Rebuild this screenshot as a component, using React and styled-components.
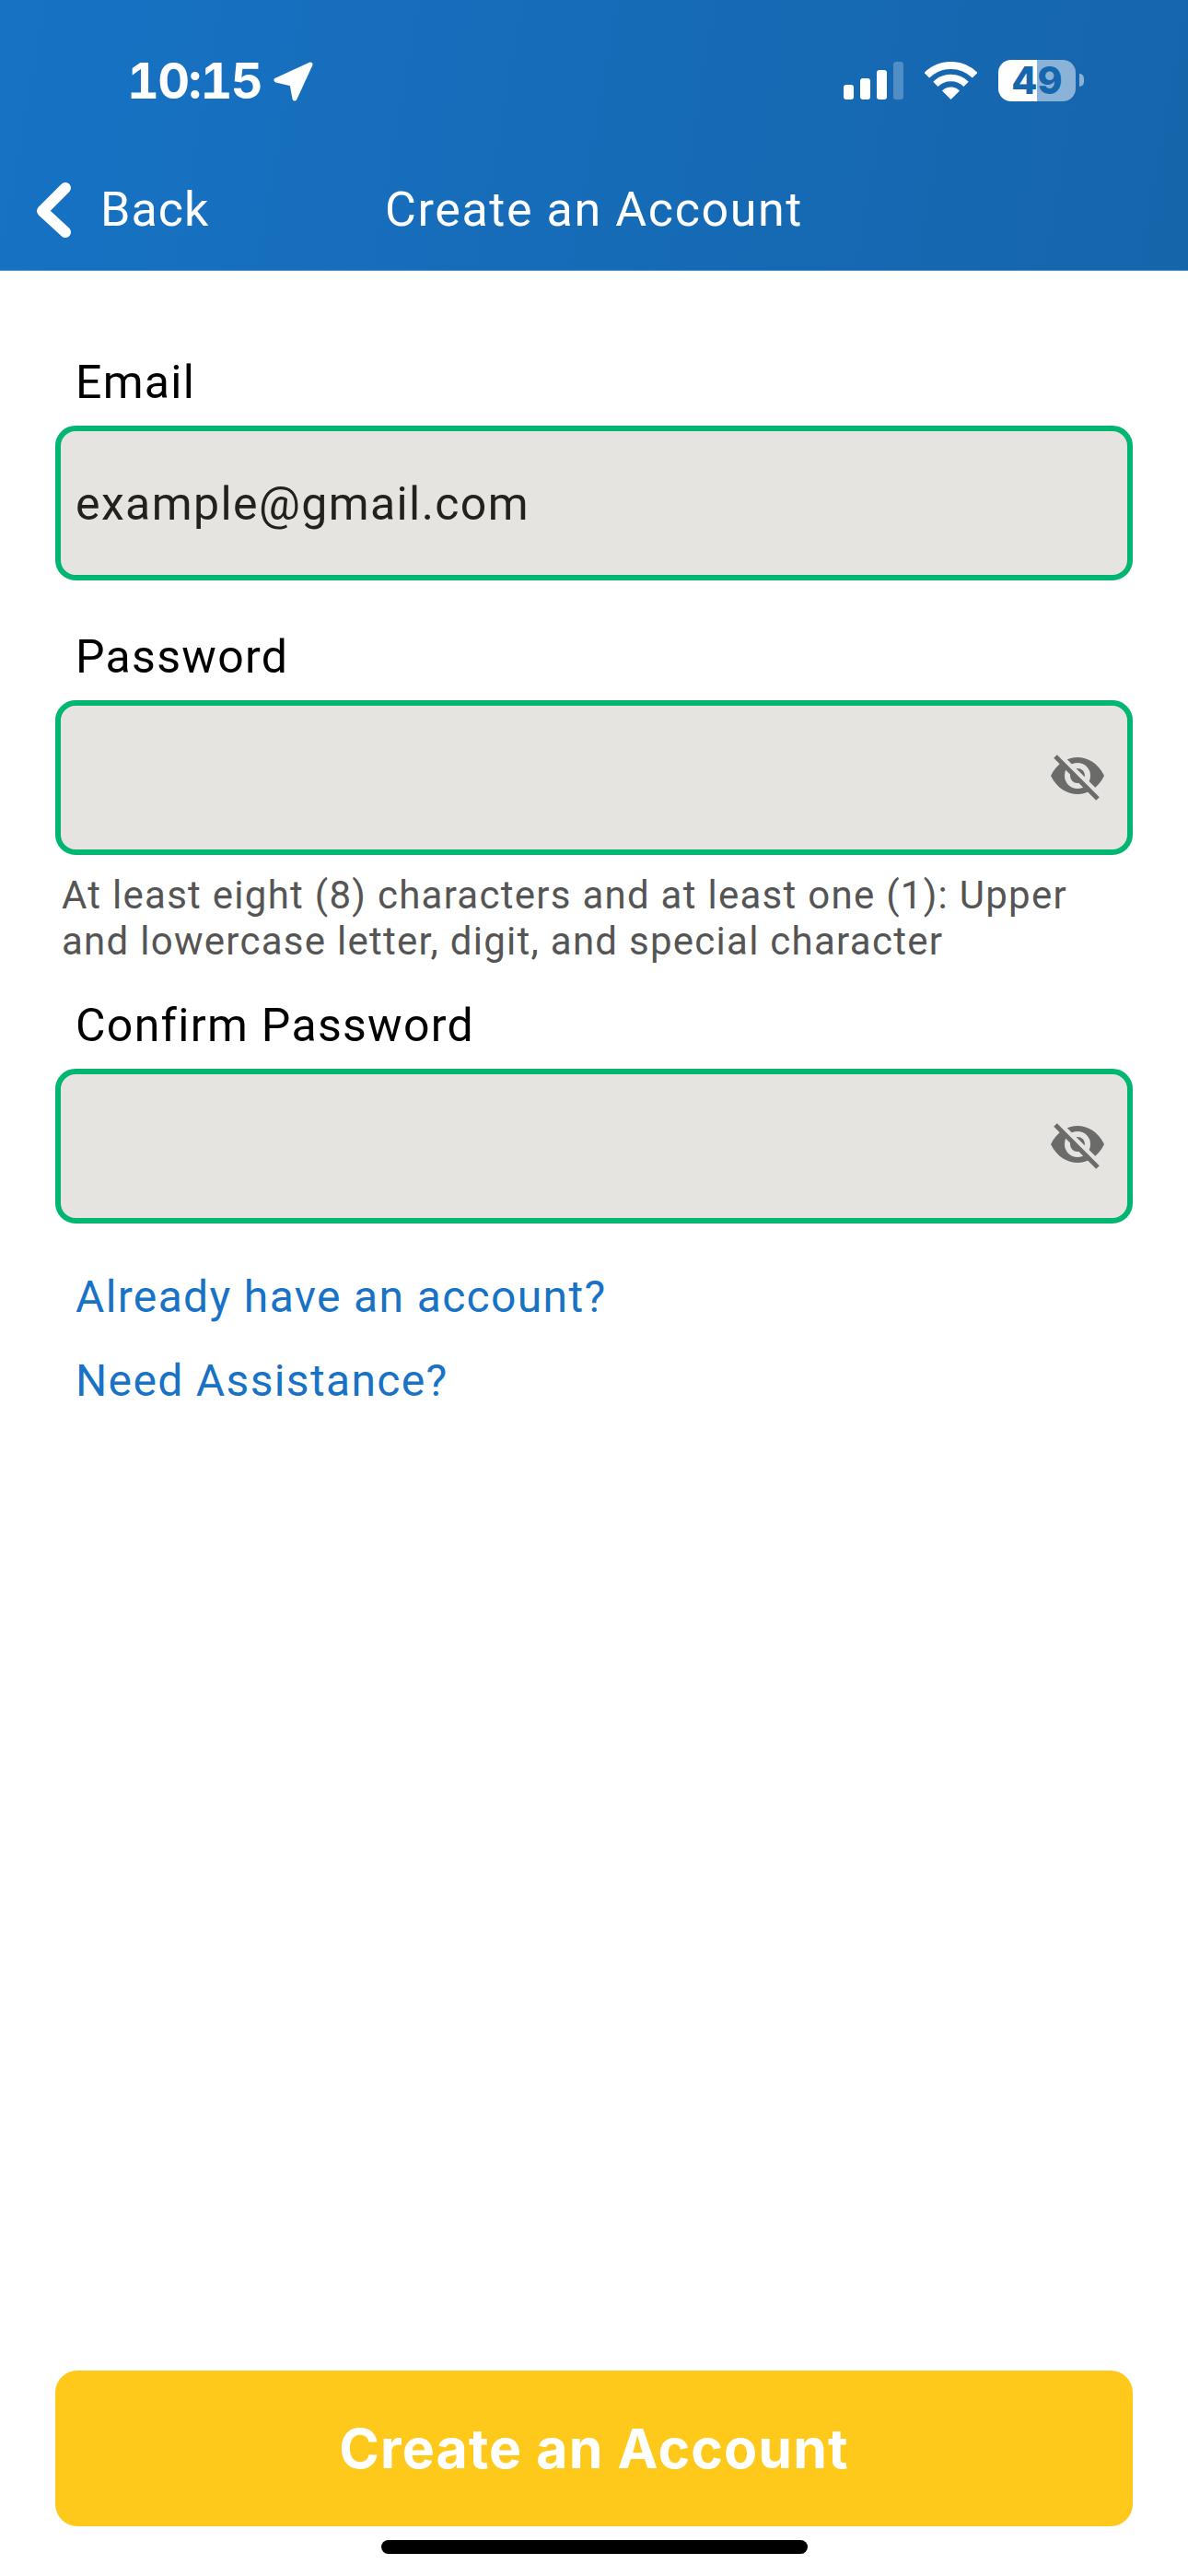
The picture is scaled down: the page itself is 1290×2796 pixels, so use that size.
import React from "react";
import styled, { createGlobalStyle } from "styled-components";

const Global = createGlobalStyle`
  html, body { margin: 0; padding: 0; background: #fff; }
  * { box-sizing: border-box; }
  body { font-family: "Roboto", "Inter", sans-serif; }
`;

const Page = styled.div`
  width: 1290px;
  height: 2796px;
  display: flex;
  flex-direction: column;
  background: #fff;
`;

const Header = styled.header`
  height: 294px;
  background: linear-gradient(100deg, #1772c4 0%, #1565ab 100%);
  border-bottom: 1px solid #4a8fcf;
  color: #fff;
`;

const StatusBar = styled.div`
  height: 175px;
  display: flex;
  align-items: center;
  justify-content: space-between;
  padding: 0 122px 0 138px;
`;

const TimeGroup = styled.div`
  display: flex;
  align-items: center;
  gap: 13px;
`;

const Time = styled.span`
  font-family: "Inter", sans-serif;
  font-size: 54px;
  font-weight: 700;
  line-height: 1;
  letter-spacing: -1.6px;
  font-variant-numeric: tabular-nums;
`;

const StatusIcons = styled.div`
  display: flex;
  align-items: center;
  gap: 23px;
`;

const Battery = styled.div`
  position: relative;
  width: 84px;
  height: 45px;
  border-radius: 14px;
  background: linear-gradient(90deg, #fff 50%, rgba(255, 255, 255, 0.5) 50%);
  color: #1666ad;
  font-family: "Inter", sans-serif;
  font-size: 41px;
  font-weight: 800;
  line-height: 45px;
  text-align: center;
  &::after {
    content: "";
    position: absolute;
    left: 88px;
    top: 15px;
    width: 5px;
    height: 14px;
    border-radius: 0 7px 7px 0;
    background: rgba(255, 255, 255, 0.5);
  }
`;

const Nav = styled.nav`
  height: 105px;
  display: grid;
  grid-template-columns: 1fr auto 1fr;
  align-items: center;
  padding: 0 40px;
`;

const BackLink = styled.div`
  display: flex;
  align-items: center;
  gap: 32px;
  font-size: 52px;
  line-height: 1;
  letter-spacing: 1px;
`;

const Title = styled.h1`
  margin: 0;
  font-size: 52px;
  font-weight: 400;
  line-height: 1;
  letter-spacing: 1.6px;
`;

const Form = styled.main`
  flex: 1;
  display: flex;
  flex-direction: column;
  padding: 0 60px;
`;

const Label = styled.div`
  margin-top: ${(p) => p.$top}px;
  padding-left: 22px;
  height: 60px;
  font-size: 50px;
  line-height: 62px;
  letter-spacing: 1.3px;
  color: #000;
`;

const Field = styled.div`
  margin-top: 18px;
  height: 168px;
  display: flex;
  align-items: center;
  justify-content: space-between;
  padding: 0 25px 0 16px;
  background: #e6e4e1;
  border: 6px solid #00b670;
  border-radius: 22px;
`;

const FieldValue = styled.span`
  padding-top: 2px;
  font-size: 50px;
  letter-spacing: 1.4px;
  color: #23211e;
`;

const Hint = styled.p`
  margin: 19px 0 0;
  padding-left: 7px;
  font-size: 42px;
  line-height: 50px;
  letter-spacing: 1.27px;
  color: #555;
`;

const Links = styled.div`
  margin-top: 50px;
  padding-left: 22px;
  display: flex;
  flex-direction: column;
  gap: 31px;
`;

const TextLink = styled.a`
  font-size: 48px;
  line-height: 60px;
  letter-spacing: 1.35px;
  color: #1872c6;
`;

const Footer = styled.footer`
  padding: 0 60px 24px;
  display: flex;
  flex-direction: column;
  align-items: center;
`;

const Submit = styled.button`
  width: 100%;
  height: 169px;
  border: 0;
  border-radius: 24px;
  background: #ffc91c;
  color: #fff;
  font-family: "Inter", sans-serif;
  font-size: 59px;
  font-weight: 700;
  letter-spacing: 1.1px;
`;

const HomeBar = styled.div`
  margin-top: 15px;
  width: 463px;
  height: 15px;
  border-radius: 8px;
  background: #000;
`;

const Eye = () => (
  <svg width="58" height="50" viewBox="0 0 58 50" aria-hidden="true">
    <path d="M0 23 C7 9 18 3 29 3 C40 3 51 9 58 23 C51 37 40 43 29 43 C18 43 7 37 0 23 Z" fill="#6b6b69" />
    <circle cx="29" cy="23" r="14" fill="#e6e4e1" />
    <circle cx="29" cy="23" r="8" fill="#6b6b69" />
    <path d="M5 2 L51 48" stroke="#e6e4e1" strokeWidth="5" transform="translate(3 -3)" />
    <path d="M5 2 L51 48" stroke="#6b6b69" strokeWidth="5" />
  </svg>
);

const Arrow = () => (
  <svg width="44" height="44" viewBox="0 0 44 44" aria-hidden="true">
    <path d="M40 4 L3 21 L20 25 L23 41 Z" fill="#fff" stroke="#fff" strokeWidth="5" strokeLinejoin="round" />
  </svg>
);

const Signal = () => (
  <svg width="65" height="41" viewBox="0 0 65 41" aria-hidden="true">
    <rect x="0" y="25" width="11" height="16" rx="3" fill="#fff" />
    <rect x="18" y="18" width="11" height="23" rx="3" fill="#fff" />
    <rect x="36" y="9" width="11" height="32" rx="3" fill="#fff" />
    <rect x="54" y="0" width="11" height="41" rx="3" fill="#fff" opacity="0.25" />
  </svg>
);

const Wifi = () => (
  <svg width="57" height="41" viewBox="0 0 57 41" fill="none" aria-hidden="true">
    <path d="M2.3 14.8 A37 37 0 0 1 54.7 14.8" stroke="#fff" strokeWidth="8" />
    <path d="M11.9 24.4 A23.5 23.5 0 0 1 45.1 24.4" stroke="#fff" strokeWidth="7.5" />
    <path d="M28.5 41 L19 31.5 A13.4 13.4 0 0 1 38 31.5 Z" fill="#fff" />
  </svg>
);

const Chevron = () => (
  <svg width="37" height="60" viewBox="0 0 37 60" fill="none" aria-hidden="true">
    <path d="M31 6 L6 31 L31 54" stroke="#fff" strokeWidth="12" strokeLinecap="round" strokeLinejoin="round" />
  </svg>
);

export default function App() {
  return (
    <Page>
      <Global />
      <Header>
        <StatusBar>
          <TimeGroup>
            <Time>10:15</Time>
            <Arrow />
          </TimeGroup>
          <StatusIcons>
            <Signal />
            <Wifi />
            <Battery>49</Battery>
          </StatusIcons>
        </StatusBar>
        <Nav>
          <BackLink>
            <Chevron />
            Back
          </BackLink>
          <Title>Create an Account</Title>
        </Nav>
      </Header>
      <Form>
        <Label $top={90}>Email</Label>
        <Field>
          <FieldValue>example@gmail.com</FieldValue>
        </Field>
        <Label $top={52}>Password</Label>
        <Field>
          <span />
          <Eye />
        </Field>
        <Hint>
          At least eight (8) characters and at least one (1): Upper and lowercase letter, digit, and special character
        </Hint>
        <Label $top={35}>Confirm Password</Label>
        <Field>
          <span />
          <Eye />
        </Field>
        <Links>
          <TextLink>Already have an account?</TextLink>
          <TextLink>Need Assistance?</TextLink>
        </Links>
      </Form>
      <Footer>
        <Submit>Create an Account</Submit>
        <HomeBar />
      </Footer>
    </Page>
  );
}
